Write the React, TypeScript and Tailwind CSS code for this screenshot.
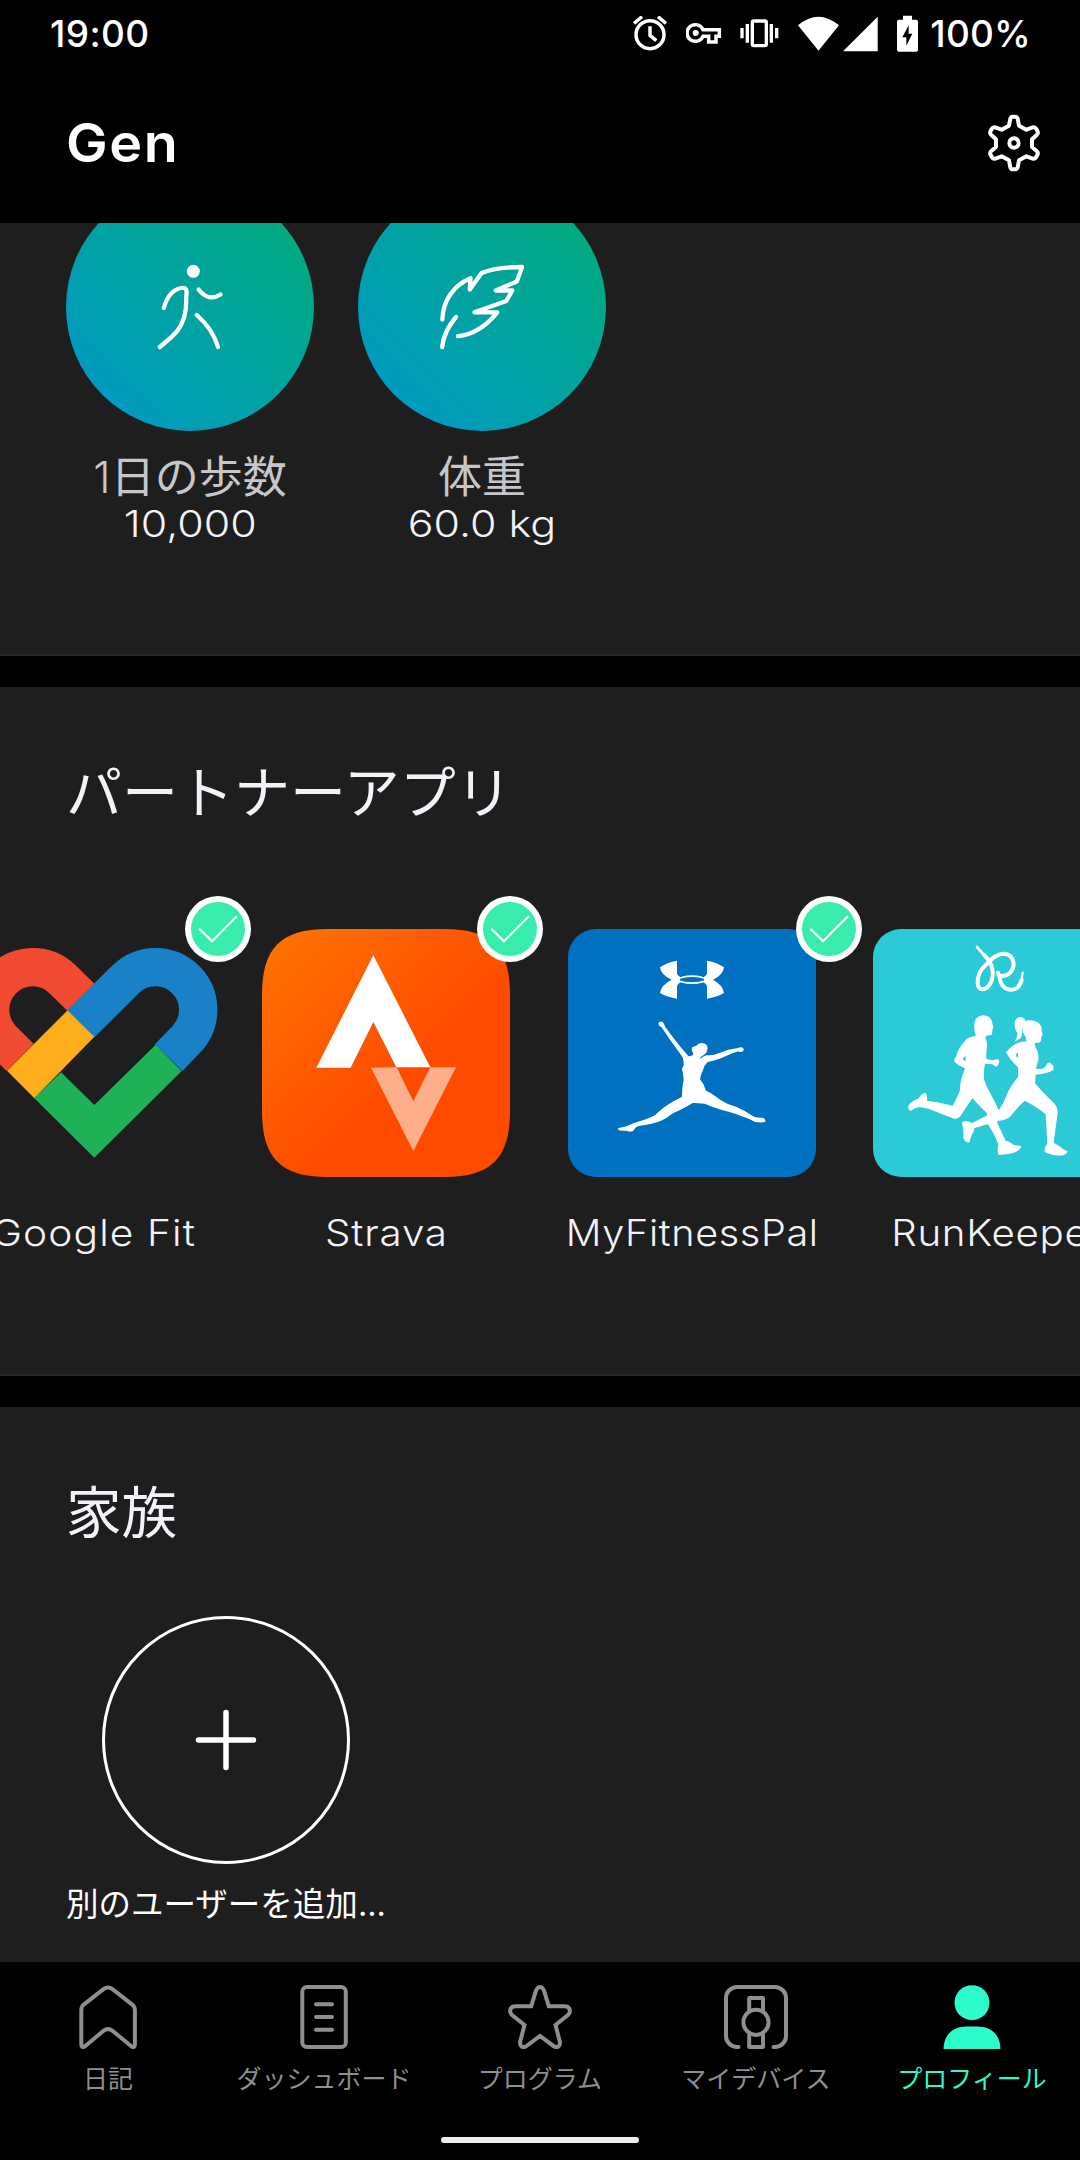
import React from "react";

const latin = "font-['Inter',sans-serif]";
const jp = "font-['Noto_Sans_CJK_JP',sans-serif]";

function StatusBar() {
  return (
    <div className={`flex h-[69px] items-center pb-[2px] pl-[50px] pr-[49px] text-[37px] font-medium leading-none text-white ${latin}`}>
      <span className="tracking-[0.4px]">19:00</span>
      <div className="ml-auto flex items-center">
        <svg className="h-[35px] w-[34px]" viewBox="100 47 102 105" fill="none" stroke="#fff" strokeWidth="10.500">
          <circle cx="151" cy="103" r="42" />
          <path d="M151 78V105L170 121" />
          <path d="M103 69L127 49M199 69L175 49" />
        </svg>
        <svg className="ml-[19px] h-[35px] w-[36px]" viewBox="258 47 108 105" fill="none" stroke="#fff" strokeWidth="10.500">
          <path d="M309 88H358V108H348V125H326V108H309A25 25 0 1 1 309 88Z" />
          <circle cx="287" cy="98" r="9" fill="#fff" stroke="none" />
        </svg>
        <svg className="ml-[18px] h-[35px] w-[39px]" viewBox="419 47 117 105" fill="none" stroke="#fff" strokeWidth="10">
          <rect x="456" y="62" width="42" height="74" rx="5" />
          <path d="M441 71V127M425 83V114M513 71V127M529 83V114" />
        </svg>
        <svg className="ml-[19px] h-[36px] w-[41px]" viewBox="594 44 123 108" fill="#fff">
          <path d="M594 72Q655 20 717 72L655.500 148Z" />
        </svg>
        <svg className="ml-[4px] h-[36px] w-[35px]" viewBox="727 44 105 108" fill="#fff">
          <path d="M831 46V150H727Z" />
        </svg>
        <svg className="ml-[19px] h-[37px] w-[21px]" viewBox="891 43 63 111">
          <path fill="#fff" d="M909 45H936V57H948Q954 57 954 63V147Q954 153 948 153H897Q891 153 891 147V63Q891 57 897 57H909Z" />
          <path fill="#000" d="M926 74L907 110H919V135L937 99H926Z" />
        </svg>
        <span className="ml-[12px] tracking-[0.2px]">100%</span>
      </div>
    </div>
  );
}

function GearIcon() {
  return (
    <svg className="size-[60px]" viewBox="1152 339 180 180" fill="none" stroke="#fff" strokeWidth="12" strokeLinejoin="round">
      <path d="M1238 350H1246Q1251 350 1253 356L1257 377L1279 389L1298 382Q1305 380 1309 387L1313 395Q1315 401 1310 405L1296 418V441L1310 453Q1315 457 1313 463L1309 470Q1305 478 1298 476L1279 469L1257 481L1253 502Q1251 508 1246 508H1238Q1233 508 1231 502L1227 481L1205 469L1186 476Q1179 478 1175 470L1171 463Q1169 457 1174 453L1188 441V418L1174 405Q1169 401 1171 395L1175 387Q1179 380 1186 382L1205 389L1227 377L1231 356Q1233 350 1238 350Z" />
      <circle cx="1242" cy="429" r="14" />
    </svg>
  );
}

function Goal({ label, value, valueClass, children }: { label: React.ReactNode; value: string; valueClass: string; children: React.ReactNode }) {
  return (
    <div className="flex w-[248px] flex-col items-center">
      <div className="size-[248px] rounded-full bg-linear-to-tr from-[#009bbe] from-15% to-[#04aa7d] to-88%">{children}</div>
      <div className={`mt-[19px] h-[48px] whitespace-nowrap text-[44px] leading-[48px] text-[#c7c6cb] ${jp}`}>{label}</div>
      <div className={`mt-[2px] whitespace-nowrap text-[37px] font-[350] leading-[48px] text-[#f3f2f8] ${latin} ${valueClass}`}>{value}</div>
    </div>
  );
}

function PartnerApp({ name, className, nameClass, badge, children }: { name: string; className: string; nameClass: string; badge?: string; children: React.ReactNode }) {
  return (
    <div className={`relative flex w-[248px] shrink-0 flex-col items-center ${className}`}>
      {children}
      {badge && (
        <svg className={`absolute -top-[33px] size-[66px] ${badge}`} viewBox="0 0 66 66">
          <circle cx="33" cy="33" r="33" fill="#fff" />
          <circle cx="33" cy="33" r="27" fill="#38edac" />
          <path d="M15 33.500L27 45.300L51.300 20.800" fill="none" stroke="#fff" strokeWidth="2.200" strokeLinecap="round" />
        </svg>
      )}
      <div className={`mt-[32px] whitespace-nowrap text-[37px] font-[350] leading-[48px] text-[#f3f2f8] ${latin} ${nameClass}`}>{name}</div>
    </div>
  );
}

function GoogleFitLogo() {
  return (
    <svg className="size-[248px]" viewBox="-90 147 744 744" fill="none" strokeWidth="115">
      <path stroke="#f24a31" d="M60 532L6.500 478.500A128 128 0 0 1 187.500 297.500L243 352" />
      <path stroke="#1881c7" d="M243 431L377.500 297.500A128 128 0 0 1 558.500 478.500L506 533" />
      <path fill="#1fb156" stroke="none" d="M183 577L283 675L467 494L545 573L283 833L103 655Z" />
      <path fill="#fdae1a" stroke="none" d="M203 391L283 470L103 655L21 572Z" />
    </svg>
  );
}

function StravaLogo() {
  return (
    <svg className="size-[248px]" viewBox="66 147 744 744">
      <defs>
        <linearGradient id="strava" x1="0" y1="0" x2="1" y2="1">
          <stop offset="0.050" stopColor="#ff7200" />
          <stop offset="0.600" stopColor="#ff4b00" />
        </linearGradient>
      </defs>
      <path fill="url(#strava)" d="M66 345C66 205 122 147 262 147H614C754 147 810 205 810 345V693C810 833 754 891 614 891H262C122 891 66 833 66 693Z" />
      <path fill="#fff" d="M400 226L571 562H469L400 426L332 563H229Z" />
      <path fill="#ffae8b" d="M393 563L470 562L520 664L571 562H648L520 813Z" />
    </svg>
  );
}

function MyFitnessPalLogo() {
  return (
    <svg className="size-[248px] rounded-[28px] bg-[#0070c0]" viewBox="84 147 744 744" fill="#fff">
      <path d="M411 242Q380 247 360 262Q363 286 395 299Q364 314 360 339Q382 352 411 356V318Q413 311 420 308V290Q413 287 411 281Z" />
      <path d="M501 242Q532 247 552 262Q549 286 519 299Q548 314 552 339Q530 352 501 356V318Q499 311 492 308V290Q499 287 501 281Z" />
      <ellipse cx="456" cy="299" rx="40" ry="10.500" fill="none" stroke="#fff" strokeWidth="5" />
      <path d="M355 431Q359 421 368 426Q374 432 375 440L408 484Q426 507 445 528Q452 530 459 524Q461 519 456 514Q454 505 458 501Q470 498 476 491Q494 485 502 499Q504 512 498 519Q490 527 482 531L480 537Q490 528 500 526Q522 527 538 519Q565 507 594 504Q604 499 611 506Q613 515 603 516Q596 513 590 515Q570 521 545 534Q520 543 503 546Q492 556 489 570Q481 588 480 598Q492 611 498 632Q517 640 540 659Q565 675 590 681Q615 692 642 710Q655 714 670 713Q677 717 676 725Q668 729 645 726Q636 722 628 717Q590 702 568 696Q525 685 494 671Q475 669 458 669Q435 684 400 699Q380 715 362 723Q335 733 296 738Q285 741 280 753Q270 757 260 752Q240 754 233 748Q233 743 248 742Q265 738 280 730Q320 719 345 706Q365 685 400 664Q420 653 426 650Q426 620 431 600Q430 580 426 568Q427 560 431 556Q431 540 428 532Q410 506 388 476Q373 454 364 441Q357 439 355 431Z" />
    </svg>
  );
}

function RunKeeperLogo() {
  return (
    <svg className="size-[248px] rounded-[28px] bg-[#2ccad7]" viewBox="69 87 744 744" fill="#fff">
      <g fill="none" stroke="#fff" strokeLinecap="round" strokeWidth="12">
        <path d="M381 141L402 165" strokeWidth="8" />
        <path d="M402 165C430 190 435 225 420 252C409 271 385 275 383 250C381 225 395 205 410 192C428 172 445 160 463 161C495 165 499 204 476 222C462 231 444 230 444 218" />
        <path d="M448 226C450 252 462 269 484 269C502 268 511 255 515 240" />
        <path d="M514 242L518 218" strokeWidth="7" />
      </g>
      <path fillRule="evenodd" d="M378 407Q371 393 373 372Q376 347 400 346Q424 347 427 370L430 384L427 388Q428 405 422 406Q410 404 406 412Q412 425 411 440Q408 460 409 478Q420 480 430 481Q440 475 447 480Q450 492 440 500Q432 498 428 493L405 491Q400 515 402 538Q408 560 420 578Q435 605 447 632L442 668L467 723Q478 722 490 735L514 738Q514 748 495 757Q480 763 445 765Q441 745 445 732Q430 695 413 672Q410 655 411 640Q390 620 367 595Q350 620 330 650Q318 660 305 653Q265 638 235 626Q215 620 205 622Q190 626 183 633Q173 630 175 617Q182 603 205 596Q214 580 227 578Q233 590 231 602Q270 606 308 617Q322 592 330 570Q328 550 345 505Q330 500 314 487Q310 478 318 470Q325 445 345 422Q355 410 378 407ZM347 469Q337 473 339 479L347 483Z" />
      <path fillRule="evenodd" d="M492 427Q504 410 502 399Q490 380 495 362Q505 346 520 353Q527 358 524 363Q545 357 563 367Q577 377 575 393L578 405L574 410Q575 427 566 428L555 429Q553 435 558 445Q568 460 565 480Q560 495 558 507L578 506Q585 504 592 490Q600 484 603 491Q614 497 610 510Q598 518 585 520Q570 524 557 524L555 550Q580 580 612 610Q624 622 623 640Q616 690 611 728Q625 735 640 748L653 754Q650 766 630 767Q600 765 584 756Q583 740 592 732Q590 690 587 643Q560 620 524 602Q500 625 480 650Q465 662 445 662Q400 676 372 685Q374 695 365 705Q360 720 358 728Q345 728 340 715Q342 690 336 670Q336 662 350 664Q362 664 365 670Q400 650 445 632Q462 610 470 585Q480 560 505 530Q503 515 505 503Q480 480 468 457Q485 435 515 425L530 424Q528 410 520 400L517 382Q518 405 511 415ZM504 458Q496 462 498 468L504 474Z" />
    </svg>
  );
}

function Tab({ label, active, children }: { label: string; active?: boolean; children: React.ReactNode }) {
  return (
    <div className={`flex w-[216px] flex-col items-center ${active ? "text-[#2cfbcb]" : "text-[#8e8e93]"}`}>
      <svg className="size-16" viewBox="0 0 64 64" fill="none" stroke="currentColor" strokeWidth="4" strokeLinecap="round" strokeLinejoin="round">
        {children}
      </svg>
      <div className={`mt-[12px] whitespace-nowrap text-[25px] leading-[32px] ${jp}`}>{label}</div>
    </div>
  );
}

export default function App() {
  return (
    <div className="flex h-[2160px] w-[1080px] flex-col overflow-hidden bg-black">
      <StatusBar />
      <header className="flex h-[154px] shrink-0 items-center justify-between pb-[6px] pl-[66px] pr-[36px]">
        <h1 className={`origin-left scale-x-[1.050] text-[53px] font-semibold leading-none tracking-[1.500px] text-white ${latin}`}>Gen</h1>
        <GearIcon />
      </header>

      <section className="h-[433px] shrink-0 overflow-hidden border-b-2 border-[#292929] bg-[#1e1e1e]">
        <div className="-mt-[40px] flex gap-[44px] pl-[66px]">
          <Goal label={<><span className="font-['Inter'] font-[350]">1</span>日の歩数</>} value="10,000" valueClass="scale-x-[1.160]">
            <svg viewBox="66 183 248 248" fill="none" stroke="#fff" strokeWidth="4.300" strokeLinecap="round">
              <circle cx="193.300" cy="271.300" r="6.500" fill="#fff" stroke="none" />
              <path d="M163.800 308C167 297 173 289.500 181 288Q186.400 287 186.600 291.500L185.800 309C184.500 320 180 330 171 337.500L159.800 347" />
              <path d="M198.600 289.500C205 298 213 299.500 220.500 294.500M196.800 315C207 324 214 333 218 347" />
            </svg>
          </Goal>
          <Goal label="体重" value="60.0 kg" valueClass="scale-x-[1.160]">
            <svg viewBox="358 183 248 248" fill="none" stroke="#fff" strokeWidth="4.300" strokeLinecap="round" strokeLinejoin="round">
              <path d="M442.300 319.500C443 302 452 286 470.500 278.200L469.800 289.500L481.600 273C492 268.500 505 267 522 267L516.800 281.500L495.800 290.500H512.300L506.300 301L474.500 312.300H497.300C487 325 473 334.500 458 336.200M442.200 347Q443.500 332 456 317" />
            </svg>
          </Goal>
        </div>
      </section>

      <section className="mt-[31px] h-[689px] shrink-0 overflow-hidden border-b-2 border-[#292929] bg-[#1e1e1e]">
        <h2 className={`mt-[70px] pl-[66px] text-[56px] leading-[64px] text-[#f3f2f8] ${jp}`}>パートナーアプリ</h2>
        <div className="-ml-[30px] mt-[108px] flex">
          <PartnerApp name="Google Fit" className="" nameClass="scale-x-[1.100] tracking-[1px]" badge="left-[215px]">
            <GoogleFitLogo />
          </PartnerApp>
          <PartnerApp name="Strava" className="ml-[44px]" nameClass="scale-x-[1.090] tracking-[0.800px]" badge="left-[215px]">
            <StravaLogo />
          </PartnerApp>
          <PartnerApp name="MyFitnessPal" className="ml-[58px]" nameClass="scale-x-[1.070] tracking-[0.600px]" badge="left-[228px]">
            <MyFitnessPalLogo />
          </PartnerApp>
          <PartnerApp name="RunKeeper" className="ml-[57px]" nameClass="scale-x-[1.090] tracking-[0.600px]">
            <RunKeeperLogo />
          </PartnerApp>
        </div>
      </section>

      <section className={`mt-[31px] h-[555px] shrink-0 overflow-hidden bg-[#1e1e1e] ${jp}`}>
        <h2 className="mt-[70px] pl-[66px] text-[55.500px] leading-[64px] text-[#f3f2f8]">家族</h2>
        <div className="ml-[66px] mt-[75px] flex w-[320px] flex-col items-center">
          <div className="flex size-[248px] items-center justify-center rounded-full border-3 border-white">
            <svg className="size-[62px]" viewBox="0 0 62 62" stroke="#fff" strokeWidth="5.500" strokeLinecap="round">
              <path d="M3.500 31H58.500M31 3.500V58.500" />
            </svg>
          </div>
          <div className="mt-[18px] whitespace-nowrap text-[32.500px] leading-[40px] text-white">別のユーザーを追加<span className="font-['Inter']">...</span></div>
        </div>
      </section>

      <nav className="flex h-[175px] shrink-0 pt-[23px]">
        <Tab label="日記">
          <path d="M5.300 25Q5.300 21.500 8 19.300L27.500 4.200Q32 .8 36.500 4.200L56 19.300Q58.900 21.500 58.900 25V59.500Q58.900 63.500 55.300 61.200L36.500 45.800Q32 42.400 27.500 45.800L9 61.200Q5.300 63.500 5.300 59.500Z" />
        </Tab>
        <Tab label="ダッシュボード">
          <rect x="10.300" y="2" width="43.500" height="60" rx="4.500" />
          <path d="M24 19.300H40M24 32H40M24 44.700H40" />
        </Tab>
        <Tab label="プログラム">
          <path strokeLinejoin="miter" d="M28.200 5Q32-1.200 35.800 5L40.800 21.300H56.500C62 21.300 63.500 26.500 60 30L47.500 40L51.800 56.500C52.700 61.500 49 63.500 45.500 61L32 51L18.500 61C15 63.500 11.300 61.500 12.200 56.500L16.500 40L4 30C.5 26.500 2 21.300 7.500 21.300H23.200Z" />
        </Tab>
        <Tab label="マイデバイス">
          <path d="M14.500 62H13A11 11 0 0 1 2 51V13A11 11 0 0 1 13 2H51A11 11 0 0 1 62 13V51A11 11 0 0 1 51 62H49.500" />
          <circle cx="32" cy="37.300" r="12.600" />
          <path d="M25.200 25.500V13H39V25.500M25.200 50V62H39V50" />
        </Tab>
        <Tab label="プロフィール" active>
          <circle cx="32" cy="17.700" r="17.500" fill="currentColor" stroke="none" />
          <path d="M3.600 64C3.600 50 13 41.400 26 41.400H38C51 41.400 60.400 50 60.400 64Z" fill="currentColor" stroke="none" />
        </Tab>
      </nav>
      <div className="h-[6px] w-[198px] self-center rounded-full bg-[#ececec]" />
    </div>
  );
}
